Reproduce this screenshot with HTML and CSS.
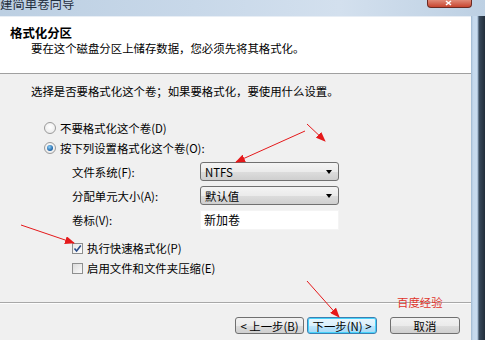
FILE: index.html
```html
<!DOCTYPE html>
<html lang="zh-CN">
<head>
<meta charset="utf-8">
<title>新建简单卷向导</title>
<link rel="stylesheet" href="styles.css">
</head>
<body>
<div class="window">
  <div class="titlebar">
    <span class="title-text">建简单卷向导</span>
    <span class="close-btn"><span class="close-x"></span></span>
  </div>
  <div class="frame-row">
    <div class="client">
      <div class="header">
        <div class="header-title">格式化分区</div>
        <div class="header-sub">要在这个磁盘分区上储存数据，您必须先将其格式化。</div>
      </div>
      <div class="content">
        <div class="intro">选择是否要格式化这个卷；如果要格式化，要使用什么设置。</div>
        <div class="options">
          <div class="opt-row"><span class="radio"></span><span>不要格式化这个卷(D)</span></div>
          <div class="opt-row"><span class="radio checked"></span><span>按下列设置格式化这个卷(O):</span></div>
          <div class="form">
            <div class="label">文件系统(F):</div>
            <div class="select"><span>NTFS</span><span class="caret"></span></div>
            <div class="label">分配单元大小(A):</div>
            <div class="select"><span>默认值</span><span class="caret"></span></div>
            <div class="label">卷标(V):</div>
            <div class="input">新加卷</div>
          </div>
          <div class="checks">
            <div class="opt-row"><span class="checkbox checked"><svg viewBox="0 0 9 9" width="9" height="9"><path d="M1.5 4.5 L3.6 7 L7.8 1.5" fill="none" stroke="#2a4d8a" stroke-width="1.6"/></svg></span><span>执行快速格式化(P)</span></div>
            <div class="opt-row"><span class="checkbox"></span><span>启用文件和文件夹压缩(E)</span></div>
          </div>
        </div>
      </div>
      <div class="footer">
        <button class="btn">&lt; 上一步(B)</button>
        <button class="btn btn-default">下一步(N) &gt;</button>
        <button class="btn btn-cancel">取消</button>
        <span class="watermark">百度经验</span>
      </div>
    </div>
    <div class="frame-right"></div>
  </div>
  <svg class="arrows" width="485" height="340" viewBox="0 0 485 340">
    <defs>
      <marker id="ah" markerWidth="10" markerHeight="8" refX="9" refY="4" orient="auto" markerUnits="userSpaceOnUse">
        <path d="M0 0 L10 4 L0 8 Z" fill="#e5191b"/>
      </marker>
    </defs>
    <line x1="307" y1="124" x2="325" y2="141" stroke="#e5191b" stroke-width="1" marker-end="url(#ah)"/>
    <line x1="305" y1="131" x2="236" y2="162" stroke="#e5191b" stroke-width="1" marker-end="url(#ah)"/>
    <line x1="21" y1="225" x2="74" y2="243" stroke="#e5191b" stroke-width="1" marker-end="url(#ah)"/>
    <line x1="307" y1="281" x2="339" y2="317" stroke="#e5191b" stroke-width="1" marker-end="url(#ah)"/>
    <path d="M446 1 L451 5 M451 1 L446 5" stroke="#fff" stroke-width="1.6"/>
  </svg>
</div>
</body>
</html>
```
FILE: styles.css
```css
* { box-sizing: border-box; }
html, body { margin: 0; padding: 0; }
body {
  width: 485px;
  height: 340px;
  overflow: hidden;
  font-family: "Noto Sans CJK SC", "DejaVu Sans", sans-serif;
  font-size: 11.4px;
  color: #000;
  background: #2c3b4b;
}
.window {
  position: relative;
  width: 485px;
  height: 340px;
  display: flex;
  flex-direction: column;
}
.titlebar {
  height: 16px;
  display: flex;
  justify-content: space-between;
  align-items: flex-start;
  background: linear-gradient(90deg, #bccfe2 0%, #c8d8e9 40%, #d3e0ee 70%, #bdd0e3 100%);
  overflow: hidden;
}
.title-text {
  margin-top: -3px;
  margin-left: 0;
  font-size: 12.4px;
  line-height: 14px;
  color: #1f2d3d;
}
.close-btn {
  width: 45px;
  height: 8px;
  margin-right: 13px;
  border: 1px solid #6b2a22;
  border-top: none;
  border-radius: 0 0 4px 4px;
  background: linear-gradient(#e08a78, #c8452f);
}
.frame-row {
  flex: 1;
  display: flex;
}
.client {
  position: relative;
  width: 471px;
  display: flex;
  flex-direction: column;
  background: #f0f0f0;
}
.frame-right {
  flex: 1;
  background: linear-gradient(90deg, #9db7d0 0px, #c4d8ec 2px, #c9dcef 6px, #8fa6be 7px, #3a4b5d 8px, #222e3b 14px);
}
.header {
  height: 58px;
  background: #fff;
  border-top: 1px solid #e8eef5;
  border-bottom: 1px solid #a0a0a0;
  padding: 9px 0 0 10px;
}
.header-title {
  font-weight: bold;
  font-size: 12.4px;
  line-height: 15px;
}
.header-sub {
  margin-left: 21px;
  line-height: 15px;
}
.content {
  flex: 1;
  padding: 10px 0 0 31px;
}
.intro {
  line-height: 14px;
}
.options {
  margin-top: 20px;
  padding-left: 13px;
}
.opt-row {
  height: 20px;
  display: flex;
  align-items: center;
  gap: 4px;
}
.radio {
  width: 12px;
  height: 12px;
  border-radius: 50%;
  border: 1px solid #9a9a9a;
  background: radial-gradient(circle at 50% 40%, #fff 0%, #e6e6e6 100%);
  display: inline-flex;
  align-items: center;
  justify-content: center;
}
.radio.checked::after {
  content: "";
  width: 6px;
  height: 6px;
  border-radius: 50%;
  background: radial-gradient(circle at 40% 35%, #8fd2f7 0%, #2a6fb0 60%, #1d4f86 100%);
}
.form {
  margin-top: 4px;
  margin-left: 28px;
  display: grid;
  grid-template-columns: 128px 139px;
  grid-template-rows: 19px 19px 20px;
  row-gap: 5px;
  align-items: center;
}
.label {
  line-height: 14px;
}
.select {
  height: 19px;
  border: 1px solid #707070;
  border-radius: 3px;
  background: linear-gradient(#f4f4f4 0%, #ebebeb 50%, #dddddd 51%, #cfcfcf 100%);
  display: flex;
  justify-content: space-between;
  align-items: center;
  padding: 0 6px 0 4px;
  line-height: 14px;
}
.caret {
  width: 0;
  height: 0;
  border-left: 3.5px solid transparent;
  border-right: 3.5px solid transparent;
  border-top: 4px solid #000;
}
.input {
  height: 20px;
  background: #fff;
  border: 1px solid #f4f4f4;
  padding: 0 3px;
  line-height: 18px;
  font-size: 12px;
}
.checks {
  margin-top: 8px;
  margin-left: 28px;
}
.checkbox {
  width: 11px;
  height: 11px;
  border: 1px solid #8e8f8f;
  background: linear-gradient(135deg, #dcdcdc, #fafafa);
  display: inline-flex;
  align-items: center;
  justify-content: center;
}
.checkbox.checked {
  background: linear-gradient(135deg, #e8e8e8, #fdfdfd);
}
.footer {
  position: relative;
  height: 38px;
  border-top: 1px solid #a8a8a8;
  box-shadow: inset 0 1px 0 #fdfdfd;
  display: flex;
  justify-content: flex-end;
  align-items: flex-start;
  padding: 14px 11px 0 0;
}
.btn {
  width: 69px;
  height: 17px;
  border: 1px solid #707070;
  border-radius: 3px;
  background: linear-gradient(#f2f2f2 0%, #ebebeb 50%, #dddddd 51%, #cfcfcf 100%);
  font-family: inherit;
  font-size: 11.4px;
  line-height: 14px;
  padding: 0;
  color: #000;
}
.btn-default {
  width: 70px;
  margin-left: 3px;
  border-color: #3c7fb1;
  box-shadow: inset 0 0 0 1px #48d3fb;
  background: linear-gradient(#eaf6fd 0%, #d9f0fc 50%, #bee6fd 51%, #a7d9f5 100%);
}
.btn-cancel {
  width: 70px;
  margin-left: 13px;
}
.watermark {
  position: absolute;
  left: 397px;
  top: -8px;
  color: #e0342c;
  font-size: 11.4px;
  line-height: 14px;
}
.arrows {
  position: absolute;
  left: 0;
  top: 0;
  pointer-events: none;
}
```
